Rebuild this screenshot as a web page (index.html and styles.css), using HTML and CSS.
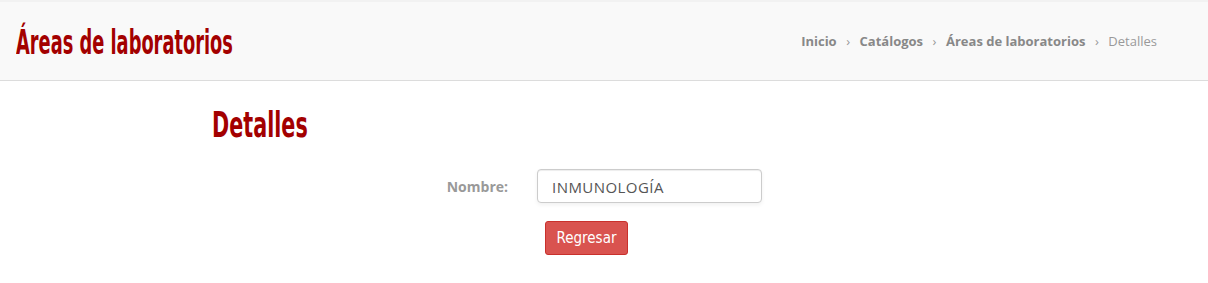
FILE: index.html
```html
<!DOCTYPE html>
<html lang="es">
<head>
<meta charset="utf-8">
<title>Áreas de laboratorios</title>
<link rel="stylesheet" href="styles.css">
</head>
<body>
<header class="page-header">
  <h1 class="page-title">Áreas de laboratorios</h1>
  <nav class="breadcrumb">
    <a href="#">Inicio</a><span class="sep">›</span>
    <a href="#">Catálogos</a><span class="sep">›</span>
    <a href="#">Áreas de laboratorios</a><span class="sep">›</span>
    <span class="current">Detalles</span>
  </nav>
</header>
<main class="content">
  <h2 class="section-title">Detalles</h2>
  <form class="form">
    <div class="form-row">
      <label class="form-label">Nombre:</label>
      <div class="form-control">INMUNOLOGÍA</div>
    </div>
    <div class="form-actions">
      <button type="button" class="btn-danger">Regresar</button>
    </div>
  </form>
</main>
</body>
</html>
```
FILE: styles.css
```css
* { box-sizing: border-box; }
html, body { margin: 0; padding: 0; background: #fff; }
body { font-family: "Open Sans", "Liberation Sans", sans-serif; font-size: 13px; color: #555; }

.page-header {
  height: 81px;
  background: #f9f9f9;
  border-top: 2px solid #f2f2f2;
  border-bottom: 1px solid #dcdcdc;
  display: flex;
  align-items: center;
  justify-content: space-between;
  padding: 0 51px 0 16px;
}
.page-title {
  margin: 0;
  display: inline-block;
  font-family: "DejaVu Sans Condensed", sans-serif;
  font-weight: 700;
  font-size: 33px;
  color: #a30000;
  line-height: 1;
  padding-top: 2px;
  transform: scaleX(0.6);
  transform-origin: left center;
  white-space: nowrap;
}
.breadcrumb { display: flex; align-items: center; font-size: 13px; margin-top: -1px; }
.breadcrumb a { color: #888; font-weight: 700; text-decoration: none; }
.breadcrumb .sep { color: #999; margin: 0 9.5px; }
.breadcrumb .current { color: #999; }

.content { padding: 22px 0 0 212px; }
.section-title {
  margin: 0;
  display: inline-block;
  font-family: "DejaVu Sans Condensed", sans-serif;
  font-weight: 700;
  font-size: 36px;
  color: #a30000;
  line-height: 44px;
  transform: scaleX(0.64);
  transform-origin: left center;
}
.form { margin-top: 22px; }
.form-row { display: flex; align-items: center; }
.form-label {
  width: 325px;
  text-align: right;
  font-weight: 700;
  font-size: 14px;
  color: #999;
  padding-right: 29px;
}
.form-control {
  width: 225px;
  height: 34px;
  border: 1px solid #ccc;
  border-radius: 4px;
  box-shadow: inset 0 1px 1px rgba(0,0,0,.075), 0 2px 4px rgba(0,0,0,.06);
  background: #fff;
  padding: 7px 14px 5px;
  line-height: 20px;
  font-size: 15px;
  letter-spacing: 0.45px;
  color: #555;
}
.form-actions { padding: 18px 0 0 333px; }
.btn-danger {
  font-family: "DejaVu Sans Condensed", sans-serif;
  font-size: 15px;
  color: #fff;
  background: #d9534f;
  border: 1px solid #c9302c;
  border-radius: 3px;
  height: 34px;
  width: 83px;
  padding: 0;
  cursor: pointer;
}
```
